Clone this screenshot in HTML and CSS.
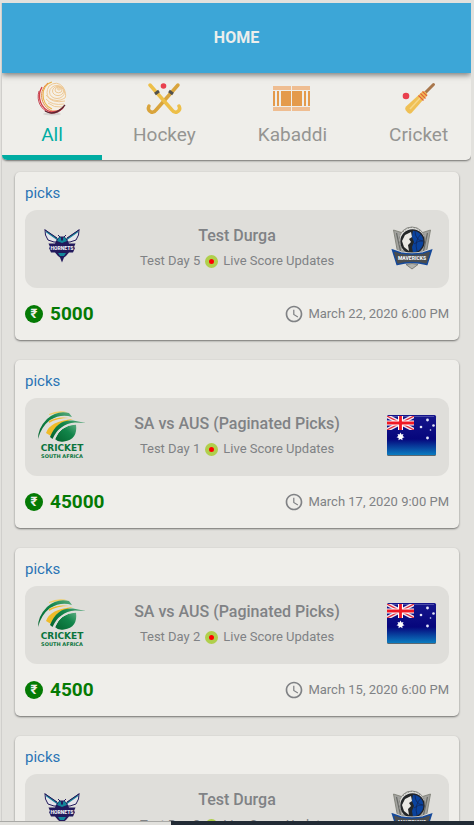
FILE: index.html
```
<!DOCTYPE html>
<html lang="en">
<head>
<meta charset="utf-8">
<meta name="viewport" content="width=device-width, initial-scale=1">
<title>Home</title>
<link rel="stylesheet" href="styles.css">
</head>
<body>
<svg class="sprite" aria-hidden="true">
  <defs>
    <linearGradient id="flag-blue" x1="0" y1="0" x2="0" y2="1">
      <stop offset="0" stop-color="#16168c"/><stop offset=".6" stop-color="#06067c"/><stop offset="1" stop-color="#0a7cc0"/>
    </linearGradient>
    <linearGradient id="leaf" x1="0" y1="1" x2="1" y2="0">
      <stop offset="0" stop-color="#04642f"/><stop offset=".6" stop-color="#12854a"/><stop offset="1" stop-color="#5cab80"/>
    </linearGradient>
  </defs>

  <symbol id="hornets" viewBox="0 0 50 50">
    <g stroke="#231a5c" stroke-width="1" stroke-linejoin="round">
      <path fill="#e4e4ea" d="M8 8 20 16.500 22 20 17 20 11 18 8.500 13Z"/>
      <path fill="#e4e4ea" d="M42 8 30 16.500 28 20 33 20 39 18 41.500 13Z"/>
    </g>
    <path d="M9 9.500 21 18M41 9.500 29 18" stroke="#158298" stroke-width="1.400"/>
    <path d="M7.500 7.500 20 16M42.500 7.500 30 16" stroke="#231a5c" stroke-width="1"/>
    <path d="M21 13 24 16M29 13 26 16" stroke="#231a5c" stroke-width="1"/>
    <path fill="#231a5c" d="M20 17 23 14.500h4L30 17l2 4.500h6.500L37 25l1 1-2 4.500h-4L29 34l-2 1.500-2 5-2-5-2-1.500-3-3.500h-4L12 26l1-1-1.500-3.500H18Z"/>
    <path fill="#13869a" d="M22 15.500h2v3h2v-3h2l2 3.500-5 2-5-2ZM21 31h8l-2 3h-4Z"/>
  </symbol>

  <symbol id="mavericks" viewBox="0 0 50 50">
    <path fill="#a3a39f" stroke="#77786f" stroke-width=".8" d="M6.500 8 16 11h18l9.500-3-4 22H10.500Z"/>
    <path d="m9.500 11 4 18M40.500 11l-4 18" stroke="#696b67" stroke-width="1.200"/>
    <path d="m12.500 13 3 15M37.500 13l-3 15" stroke="#d4d4d0" stroke-width="1"/>
    <circle cx="25" cy="18" r="13" fill="#dededa" stroke="#898985"/>
    <path d="M16 10q9-9 18 0" fill="none" stroke="#77786f" stroke-width="1" stroke-dasharray="1 2"/>
    <circle cx="25.500" cy="19.500" r="11.500" fill="#0a439e" stroke="#22242a" stroke-width="1.400"/>
    <path fill="#242728" d="M26 8C10 8 10 31 26 31l-1-6 2-5-2-5Z"/>
    <path fill="#e9e8e4" d="m24 10-6 3-3 6 2 6 5 4-1-6 3-3-2-3 3-2Z"/>
    <path d="M28 9q0 9 8 10M34 12q-7 7-4 17M27 22q5-4 9-3" fill="none" stroke="#10275a" stroke-width=".8"/>
    <path fill="#55585a" stroke="#dcdcd9" stroke-width="3" d="M6 28 14 31q11 2 22 0l8-3-4.500 14q-14.500-4-29 0Z"/>
    <path fill="#4a4d4f" stroke="#15499a" stroke-width="1.400" d="M5.500 28 14 31q11 2 22 0l8.500-3L40 42.500q-15-4-30 0Z"/>
    <path fill="#b2b3ae" stroke="#6e6f69" stroke-width=".8" d="m19 42.500 6-1 6 1-6 4.500Z"/>
  </symbol>

  <symbol id="south-africa" viewBox="0 0 50 50">
    <path fill="#f0cf65" d="M12 4Q22-.500 31 2.500 21 2 12 5Z"/>
    <path fill="url(#leaf)" d="M10 9Q20 0 32 3l3 4Q24 3.500 13 10 4 17 1 29 1 18 10 9Z"/>
    <path fill="#f0bb28" d="M9 23Q13 11 36 9 24 13 17 20l-3 6Z"/>
    <path fill="#f0bb28" d="M12 11Q21 6 32 8q-12 0-20 5Z"/>
    <path fill="url(#leaf)" d="M13 27Q20 9 36 10.500l13 2.500-11-.500Q22 14 15.500 29Z"/>
    <path fill="url(#leaf)" d="M18 29Q24 15 39 14.500q2 15-12 17-6 1-9-2.500Z"/>
    <path d="M17.500 29.500Q23 15 39 14" stroke="#e0dfdb" stroke-width="1" fill="none"/>
  </symbol>

  <symbol id="australia" viewBox="0 0 50 50">
    <rect x="0" y="6" width="49" height="40" rx="1.500" fill="#5c6870"/>
    <rect x="0" y="5" width="49" height="40" rx="1.500" fill="url(#flag-blue)"/>
    <path d="M1 6.500h46" stroke="#5b5bb0" stroke-width=".8"/>
    <svg x="0" y="6" width="27" height="14" viewBox="0 0 27 14">
      <path d="m0 0 27 14M27 0 0 14" stroke="#f3e9ee" stroke-width="4"/>
      <path d="m0 0 27 14M27 0 0 14" stroke="#e4283a" stroke-width="1.200"/>
      <path d="M13.500 0v14M0 7h27" stroke="#fff" stroke-width="5"/>
      <path d="M13.500 0v14M0 7h27" stroke="#f01824" stroke-width="2.800"/>
    </svg>
    <path fill="#fff" d="m13.500 22.500 1 2 2-.5-.8 2 1.800 1.300-2.200.7.200 2.300-2-1.300-2 1.300.2-2.300-2.200-.7 1.800-1.300-.8-2 2 .5Z"/>
    <g fill="#e4e6fa"><circle cx="40.500" cy="10" r="1.400"/><circle cx="34" cy="17" r="1.300"/><circle cx="46.500" cy="15.500" r="1.300"/><circle cx="43.500" cy="20" r=".8"/><circle cx="40.500" cy="28" r="1.400"/></g>
  </symbol>

  <symbol id="clock" viewBox="0 0 24 24">
    <path fill="currentColor" d="M11.990 2C6.470 2 2 6.480 2 12s4.470 10 9.990 10C17.520 22 22 17.520 22 12S17.520 2 11.990 2zM12 20c-4.420 0-8-3.580-8-8s3.580-8 8-8 8 3.580 8 8-3.580 8-8 8zm.5-13H11v6l5.250 3.150.75-1.230-4.500-2.670z"/>
  </symbol>
</svg>

<div class="app">
  <header class="header"><h1 class="header-title">HOME</h1></header>

  <nav class="tabs" aria-label="Sports">
    <button class="tab tab-active" type="button">
      <svg class="tab-icon" viewBox="0 0 38 38" aria-hidden="true">
        <ellipse cx="19" cy="35" rx="9" ry="1.500" fill="#d5d4d1"/>
        <ellipse cx="19.500" cy="18.500" rx="13.500" ry="15.500" fill="#f6f0e6"/>
        <g fill="none">
          <g stroke="#ecc48c" stroke-width=".9">
            <ellipse cx="26" cy="10" rx="1.500" ry="1"/><ellipse cx="25.500" cy="11" rx="3.500" ry="2.800"/><ellipse cx="25" cy="12" rx="5.500" ry="4.600"/><ellipse cx="24" cy="13" rx="7.500" ry="6.500"/>
            <path d="M16 7q8-6 14 1 4 7 2 11-8 5-16 0-4-5 0-12M13 16q6 9 19 6M13 20q6 7 18 5M15 24q6 5 14 4"/>
          </g>
          <path d="M19 3C7 6 7 25 19 30" stroke="#e9b54c" stroke-width="1.200"/>
          <path d="M15 4C5 11 7 27 19 32q5 1 10-2" stroke="#e58a4a" stroke-width="1"/>
          <path d="M9 8C3 18 8 30 18 33q7 0 12-4" stroke="#d23e48" stroke-width="1.400"/>
          <path d="M6 12C3 22 8 31 17 34q9 1 14-6" stroke="#c03a49" stroke-width=".9"/>
          <path d="M12 32q10 6 20-6" stroke="#5d2733" stroke-width="1.300"/>
        </g>
      </svg>
      <span>All</span>
    </button>
    <button class="tab" type="button">
      <svg class="tab-icon" viewBox="0 0 38 38" aria-hidden="true">
        <g fill="none" stroke-linecap="round" stroke-linejoin="round">
          <path d="M33 6 11 31q-2 3-5 2-4-2-2-6" stroke="#d9a43c" stroke-width="3.500"/>
          <path d="M5 6 27 31q2 3 5 2 4-2 2-6" stroke="#edbf48" stroke-width="3.500"/>
        </g>
        <path d="m10 15 4-3M24 12l4 3" stroke="#53514b" stroke-width="3"/>
        <circle cx="18.500" cy="7" r="2.800" fill="#e9404e"/>
      </svg>
      <span>Hockey</span>
    </button>
    <button class="tab" type="button">
      <svg class="tab-icon" viewBox="0 0 38 38" aria-hidden="true">
        <path fill="#efbd91" d="M0 7h18v4H0zM19 7h18v4H19zM0 28h18v4H0zM19 28h18v4H19z"/>
        <path fill="#e49a4b" d="M0 12h2v15H0zM4 12h2v15H4zM8 12h10v15H8zM19 12h10v15H19zM31 12h2v15h-2zM35 12h2v15h-2z"/>
      </svg>
      <span>Kabaddi</span>
    </button>
    <button class="tab" type="button">
      <svg class="tab-icon" viewBox="0 0 38 38" aria-hidden="true">
        <path d="m25 14 8.500-8.500" stroke="#a9774c" stroke-width="3" stroke-linecap="round"/>
        <path fill="#efc055" d="M22.500 12.500q3-1.500 5 3.500L11.500 34q-2 1.500-4-.5l-2-2.500q-1-2 .5-3.500Z"/>
        <path d="m10 30 11-12" stroke="#f6d788" stroke-width="1.500"/>
        <path d="m18.500 16.500 5 5M20.500 14.500l5 5M22.500 12.500l4.500 4.500" stroke="#e2603f" stroke-width="1.100"/>
        <circle cx="6" cy="17" r="3.300" fill="#e9404e"/>
      </svg>
      <span>Cricket</span>
    </button>
  </nav>

  <main class="feed">
    <article class="card">
      <a class="card-link" href="#">picks</a>
      <div class="match">
        <svg class="team" viewBox="0 0 50 50" role="img" aria-label="Hornets"><use href="#hornets"/><text class="logo-name" x="25" y="28" text-anchor="middle">HORNETS</text></svg>
        <div class="match-info">
          <h2 class="match-title">Test Durga</h2>
          <p class="match-status"><span>Test Day 5</span><i class="live"></i><span>Live Score Updates</span></p>
        </div>
        <svg class="team" viewBox="0 0 50 50" role="img" aria-label="Mavericks"><use href="#mavericks"/><text class="logo-name" x="25" y="38" text-anchor="middle">MAVERICKS</text></svg>
      </div>
      <footer class="card-footer">
        <strong class="prize"><span class="rupee">₹</span>5000</strong>
        <span class="date"><svg class="clock" aria-hidden="true"><use href="#clock"/></svg><time>March 22, 2020 6:00 PM</time></span>
      </footer>
    </article>

    <article class="card">
      <a class="card-link" href="#">picks</a>
      <div class="match">
        <svg class="team" viewBox="0 0 50 50" role="img" aria-label="South Africa"><use href="#south-africa"/><text class="sa-name" x="25" y="41" text-anchor="middle">CRICKET</text><text class="sa-country" x="25" y="48" text-anchor="middle">SOUTH AFRICA</text></svg>
        <div class="match-info">
          <h2 class="match-title">SA vs AUS (Paginated Picks)</h2>
          <p class="match-status"><span>Test Day 1</span><i class="live"></i><span>Live Score Updates</span></p>
        </div>
        <svg class="team" viewBox="0 0 50 50" role="img" aria-label="Australia"><use href="#australia"/></svg>
      </div>
      <footer class="card-footer">
        <strong class="prize"><span class="rupee">₹</span>45000</strong>
        <span class="date"><svg class="clock" aria-hidden="true"><use href="#clock"/></svg><time>March 17, 2020 9:00 PM</time></span>
      </footer>
    </article>

    <article class="card">
      <a class="card-link" href="#">picks</a>
      <div class="match">
        <svg class="team" viewBox="0 0 50 50" role="img" aria-label="South Africa"><use href="#south-africa"/><text class="sa-name" x="25" y="41" text-anchor="middle">CRICKET</text><text class="sa-country" x="25" y="48" text-anchor="middle">SOUTH AFRICA</text></svg>
        <div class="match-info">
          <h2 class="match-title">SA vs AUS (Paginated Picks)</h2>
          <p class="match-status"><span>Test Day 2</span><i class="live"></i><span>Live Score Updates</span></p>
        </div>
        <svg class="team" viewBox="0 0 50 50" role="img" aria-label="Australia"><use href="#australia"/></svg>
      </div>
      <footer class="card-footer">
        <strong class="prize"><span class="rupee">₹</span>4500</strong>
        <span class="date"><svg class="clock" aria-hidden="true"><use href="#clock"/></svg><time>March 15, 2020 6:00 PM</time></span>
      </footer>
    </article>

    <article class="card">
      <a class="card-link" href="#">picks</a>
      <div class="match">
        <svg class="team" viewBox="0 0 50 50" role="img" aria-label="Hornets"><use href="#hornets"/><text class="logo-name" x="25" y="28" text-anchor="middle">HORNETS</text></svg>
        <div class="match-info">
          <h2 class="match-title">Test Durga</h2>
          <p class="match-status"><span>Test Day 3</span><i class="live"></i><span>Live Score Updates</span></p>
        </div>
        <svg class="team" viewBox="0 0 50 50" role="img" aria-label="Mavericks"><use href="#mavericks"/><text class="logo-name" x="25" y="38" text-anchor="middle">MAVERICKS</text></svg>
      </div>
    </article>
  </main>
</div>
<div class="bottom-strip"><span class="strip-light"></span><span class="strip-dark"></span></div>
</body>
</html>
```
FILE: styles.css
```
* {
  box-sizing: border-box;
}

body {
  margin: 0;
  height: 100vh;
  display: flex;
  flex-direction: column;
  overflow: hidden;
  background: #e2e1dd;
  color: #808285;
  font-family: Roboto, "Liberation Sans", sans-serif;
}

h1,
h2,
p {
  margin: 0;
}

.sprite {
  position: absolute;
  width: 0;
  height: 0;
}

.app {
  flex: 1;
  min-height: 0;
  display: flex;
  flex-direction: column;
  margin: 3px 3px 0 1px;
  border-left: 1px solid #d0cfcc;
  overflow: hidden;
}

.header {
  flex: none;
  height: 70px;
  display: flex;
  align-items: center;
  justify-content: center;
  background: #3ca6d7;
  box-shadow: 0 2px 6px rgba(0, 0, 0, 0.5);
  z-index: 1;
}

.header-title {
  color: #eceeec;
  font-size: 16px;
  line-height: 20px;
  font-weight: 700;
}

.tabs {
  flex: none;
  display: flex;
  height: 87px;
  overflow: hidden;
  background: #efeeea;
  border-radius: 0 0 5px 5px;
  box-shadow: 0 1px 2px rgba(0, 0, 0, 0.5);
}

.tab {
  flex: none;
  min-width: 100px;
  display: flex;
  flex-direction: column;
  align-items: center;
  gap: 1px;
  padding: 6px 31px 0;
  border: 0;
  border-bottom: 5px solid transparent;
  background: none;
  color: #959592;
  font-family: inherit;
  font-size: 19px;
  line-height: 34px;
}

.tab-active {
  color: #00aca2;
  border-bottom-color: #00aca2;
}

.tab-icon {
  flex: none;
  width: 38px;
  height: 38px;
}

.feed {
  flex: 1;
  min-height: 0;
  overflow: hidden;
  display: flex;
  flex-direction: column;
  gap: 20px;
  padding: 12px 12px 0 13px;
}

.card {
  flex: none;
  padding: 10px;
  border-radius: 5px;
  background: #efeeea;
  box-shadow: 0 1px 2px rgba(0, 0, 0, 0.5);
}

.card-link {
  display: block;
  margin-bottom: 6px;
  color: #2a74b5;
  font-size: 15px;
  line-height: 22px;
  text-decoration: none;
}

.match {
  display: flex;
  justify-content: space-between;
  height: 78px;
  padding: 12px;
  border-radius: 12px;
  background: #dfdeda;
}

.team {
  flex: none;
  width: 50px;
  height: 50px;
}

.match-info {
  align-self: center;
  display: flex;
  flex-direction: column;
  align-items: center;
  gap: 2px;
}

.match-title {
  font-size: 16px;
  line-height: 22px;
  font-weight: 500;
}

.match-status {
  display: flex;
  align-items: center;
  gap: 5px;
  font-size: 13px;
  line-height: 24px;
}

.live {
  width: 13px;
  height: 13px;
  border: 4px solid #b0cf4c;
  border-radius: 50%;
  background: #f00;
}

.card-footer {
  display: flex;
  align-items: center;
  justify-content: space-between;
  height: 42px;
  padding-top: 9px;
}

.prize {
  display: flex;
  align-items: center;
  gap: 7px;
  color: #047a04;
  font-size: 19px;
  line-height: 24px;
}

.rupee {
  width: 18px;
  height: 18px;
  border-radius: 50%;
  background: #047a04;
  color: #efeeea;
  font-size: 13px;
  line-height: 17px;
  text-align: center;
}

.date {
  display: flex;
  align-items: center;
  gap: 4px;
  font-size: 13px;
  line-height: 20px;
}

.clock {
  width: 20px;
  height: 20px;
}

.bottom-strip {
  flex: none;
  display: flex;
  height: 4px;
}

.strip-light {
  width: 36%;
  border-top: 1px solid #a9a9a6;
}

.strip-dark {
  flex: 1;
  background: #222b35;
}

.logo-name {
  fill: #f0f0f4;
  font-family: Roboto, sans-serif;
  font-size: 5px;
  font-weight: 900;
}

.sa-name,
.sa-country {
  fill: #0a743c;
  font-family: "DejaVu Sans", sans-serif;
  font-weight: 700;
}

.sa-name {
  font-size: 9px;
}

.sa-country {
  font-size: 5px;
}
```
